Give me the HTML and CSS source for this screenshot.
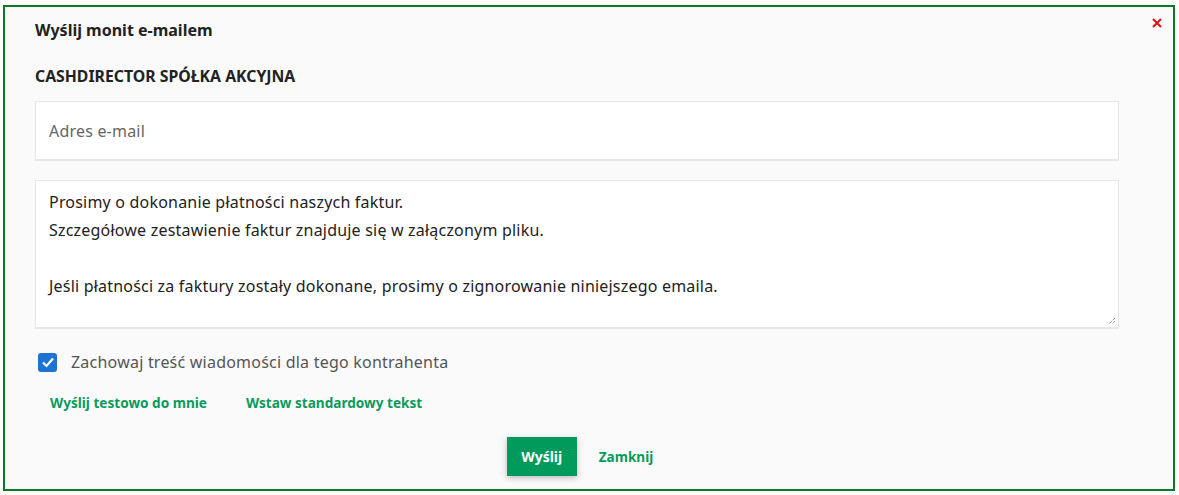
FILE: index.html
```html
<!DOCTYPE html>
<html lang="pl">
<head>
<meta charset="utf-8">
<link rel="stylesheet" href="styles.css">
</head>
<body>
<div class="dialog">
  <button class="close" aria-label="Zamknij">
    <svg width="10" height="10" viewBox="0 0 10 10"><path d="M1 1L9 9M9 1L1 9" stroke="#e01010" stroke-width="2"/></svg>
  </button>
  <h1 class="title">Wyślij monit e-mailem</h1>
  <h2 class="company">CASHDIRECTOR SPÓŁKA AKCYJNA</h2>
  <div class="field">Adres e-mail</div>
  <div class="textarea">
    <p>Prosimy o dokonanie płatności naszych faktur.</p>
    <p>Szczegółowe zestawienie faktur znajduje się w załączonym pliku.</p>
    <p>&nbsp;</p>
    <p>Jeśli płatności za faktury zostały dokonane, prosimy o zignorowanie niniejszego emaila.</p>
    <svg class="grip" width="8" height="8" viewBox="0 0 8 8"><path d="M7 1L1 7M7 4L4 7" stroke="#777" stroke-width="1" stroke-dasharray="1 1"/></svg>
  </div>
  <label class="check">
    <span class="box"><svg width="14" height="12" viewBox="0 0 14 12"><path d="M2 6.5L5.5 10L12 2.5" fill="none" stroke="#fff" stroke-width="2.2"/></svg></span>
    <span>Zachowaj treść wiadomości dla tego kontrahenta</span>
  </label>
  <div class="links">
    <a>Wyślij testowo do mnie</a>
    <a>Wstaw standardowy tekst</a>
  </div>
  <div class="actions">
    <button class="primary">Wyślij</button>
    <a class="secondary">Zamknij</a>
  </div>
</div>
</body>
</html>
```

FILE: styles.css
```css
html, body {
  margin: 0;
  padding: 0;
  background: #fff;
}
body {
  font-family: "Noto Sans", "Open Sans", sans-serif;
  color: #222;
}
.dialog {
  position: relative;
  box-sizing: border-box;
  margin: 5px 4px 0 3px;
  height: 486px;
  border: 2px solid #0b7a24;
  background: #fafafa;
  padding: 11px 54px 0 30px;
  display: flex;
  flex-direction: column;
}
.close {
  position: absolute;
  top: 11px;
  right: 11px;
  border: 0;
  background: none;
  padding: 0;
  width: 10px;
  height: 10px;
  line-height: 0;
}
.title {
  margin: 0;
  font-size: 16px;
  font-weight: 700;
  line-height: 24px;
  color: #222;
}
.company {
  margin: 23px 0 0;
  font-size: 15.8px;
  font-weight: 700;
  line-height: 23px;
  color: #222;
}
.field {
  margin-top: 13px;
  height: 60px;
  box-sizing: border-box;
  border: 1px solid #e6e6e6;
  border-bottom-width: 2px;
  background: #fff;
  padding: 0 13px;
  display: flex;
  align-items: center;
  font-size: 16px;
  letter-spacing: 0.2px;
  color: #666;
}
.textarea {
  position: relative;
  margin-top: 19px;
  height: 149px;
  box-sizing: border-box;
  border: 1px solid #e6e6e6;
  border-bottom-width: 2px;
  background: #fff;
  padding: 7px 13px;
  font-size: 16px;
  letter-spacing: 0.2px;
  color: #222;
}
.textarea p {
  margin: 0;
  line-height: 28px;
}
.grip {
  position: absolute;
  right: 2px;
  bottom: 2px;
}
.check {
  margin-top: 22px;
  display: flex;
  align-items: center;
  gap: 14px;
  padding-left: 3px;
  font-size: 16px;
  letter-spacing: 0.22px;
  color: #555;
  line-height: 22px;
}
.box {
  width: 19px;
  height: 19px;
  border-radius: 3px;
  background: #1e73d2;
  display: flex;
  align-items: center;
  justify-content: center;
}
.links {
  margin-top: 20px;
  display: flex;
  gap: 39px;
  padding-left: 15px;
  font-size: 13.6px;
  font-weight: 700;
  line-height: 20px;
  color: #0a9a5c;
}
.actions {
  margin-top: 24px;
  display: flex;
  justify-content: center;
  align-items: center;
  gap: 22px;
  padding-left: 6px;
}
.primary {
  width: 70px;
  height: 39px;
  border: 0;
  background: #009a5c;
  color: #fff;
  font-family: inherit;
  font-size: 14px;
  font-weight: 700;
  box-shadow: 0 2px 6px rgba(0,0,0,0.25);
}
.secondary {
  font-size: 13.6px;
  font-weight: 700;
  color: #0a9a5c;
}
```
